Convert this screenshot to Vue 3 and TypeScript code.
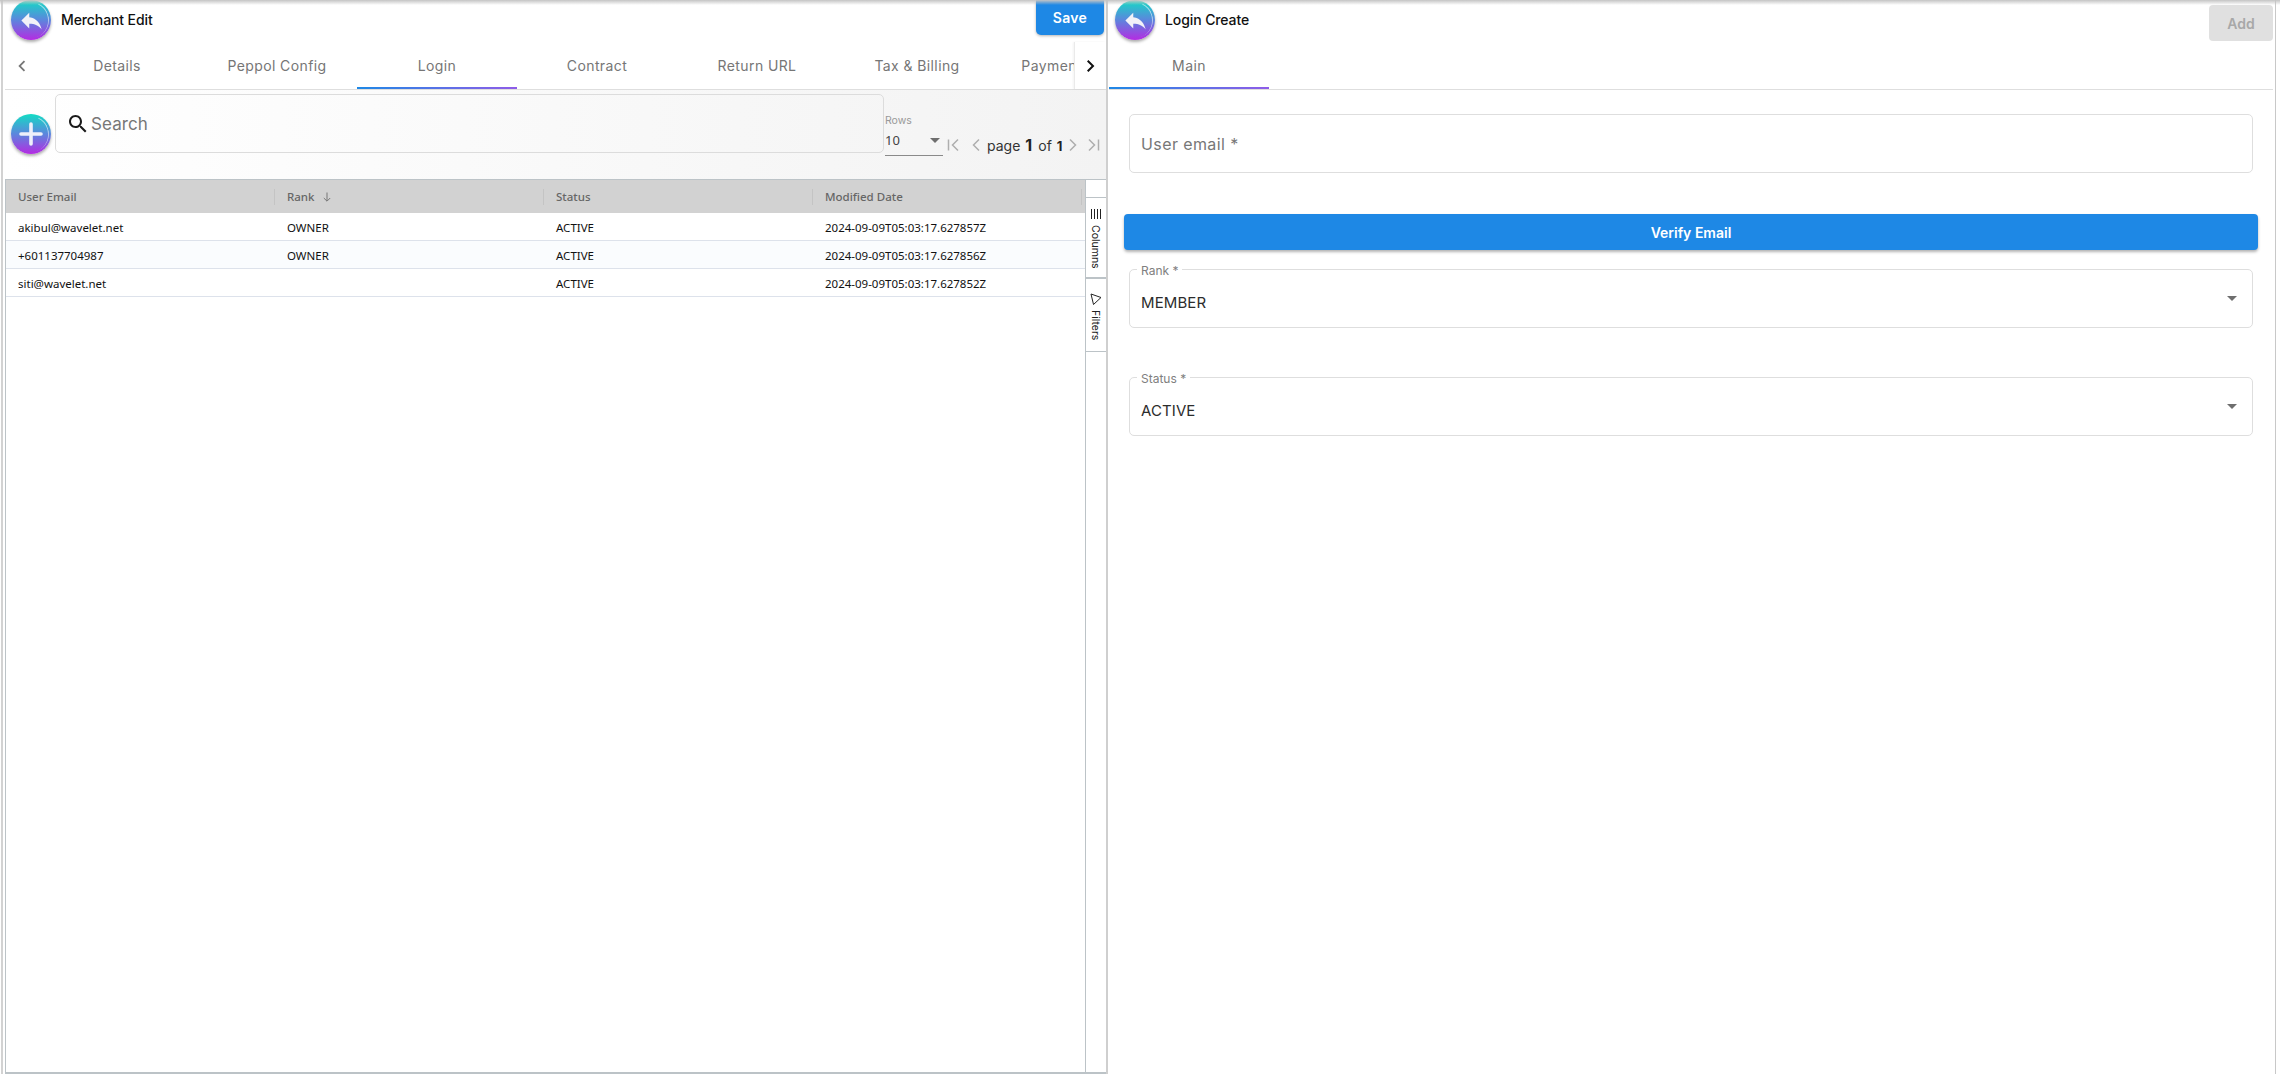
<script setup lang="ts">
const tabs: string[] = ['Details', 'Peppol Config', 'Login', 'Contract', 'Return URL', 'Tax & Billing', 'Payment Config']
const columns: string[] = ['User Email', 'Rank', 'Status', 'Modified Date']
interface Row { email: string; rank: string; status: string; modified: string }
const rows: Row[] = [
  { email: 'akibul@wavelet.net', rank: 'OWNER', status: 'ACTIVE', modified: '2024-09-09T05:03:17.627857Z' },
  { email: '+601137704987', rank: 'OWNER', status: 'ACTIVE', modified: '2024-09-09T05:03:17.627856Z' },
  { email: 'siti@wavelet.net', rank: '', status: 'ACTIVE', modified: '2024-09-09T05:03:17.627852Z' },
]
const selects = [
  { label: 'Rank *', value: 'MEMBER' },
  { label: 'Status *', value: 'ACTIVE' },
]
</script>

<template>
  <div class="page">
    <section class="panel left">
      <header class="head">
        <button class="round">
          <svg viewBox="0 0 24 24" width="27" height="27"><path d="M10 9V5l-7 7 7 7v-4.1c5 0 8.5 1.6 11 5.1-1-5-4-10-11-11z" fill="#f2f2f8" /></svg>
          <span class="gloss"></span>
        </button>
        <span class="title">Merchant Edit</span>
        <button class="save">Save</button>
      </header>

      <nav class="tabbar">
        <span class="scroll-l">
          <svg viewBox="0 0 24 24" width="22" height="22"><path d="M15.41 7.41L14 6l-6 6 6 6 1.41-1.41L10.83 12z" fill="#777" /></svg>
        </span>
        <div class="strip">
          <span v-for="t in tabs" :key="t" class="tab" :class="{ active: t === 'Login' }">{{ t }}</span>
        </div>
        <span class="scroll-r">
          <svg viewBox="0 0 24 24" width="24" height="24"><path d="M9.41 6L8 7.41 12.58 12 8 16.59 9.41 18l6-6z" fill="#111" /></svg>
        </span>
      </nav>

      <div class="toolbar">
        <button class="round add">
          <svg viewBox="0 0 40 40" width="40" height="40"><path d="M20 10v20M10 20h20" stroke="#eef0fa" stroke-width="3.6" stroke-linecap="round" fill="none" /></svg>
          <span class="gloss"></span>
        </button>
        <div class="search">
          <svg viewBox="0 0 24 24" width="24" height="24"><path d="M15.5 14h-.79l-.28-.27C15.41 12.59 16 11.11 16 9.5 16 5.91 13.09 3 9.5 3S3 5.91 3 9.5 5.91 16 9.5 16c1.61 0 3.09-.59 4.23-1.57l.27.28v.79l5 4.99L20.49 19l-4.99-5zm-6 0C7.01 14 5 11.99 5 9.5S7.01 5 9.5 5 14 7.01 14 9.5 11.99 14 9.5 14z" fill="#1a1a1a" /></svg>
          <span>Search</span>
        </div>
        <div class="rows">
          <span class="rows-label">Rows</span>
          <div class="rows-value"><span>10</span><i class="caret"></i></div>
        </div>
        <div class="pager">
          <svg viewBox="0 0 18 18" width="18" height="18"><path d="M3.5 3.5v11M13 3.5L7.5 9l5.5 5.500" class="pg" /></svg>
          <svg class="pg-prev" viewBox="0 0 18 18" width="18" height="18"><path d="M12 3.500L6.500 9l5.500 5.500" class="pg" /></svg>
          <span class="pg-text">page<b class="big">1</b>of<b class="small">1</b></span>
          <svg viewBox="0 0 18 18" width="18" height="18"><path d="M6 3.500L11.500 9 6 14.500" class="pg" /></svg>
          <svg class="pg-last" viewBox="0 0 18 18" width="18" height="18"><path d="M14.500 3.500v11M5 3.500L10.500 9 5 14.500" class="pg" /></svg>
        </div>
      </div>

      <div class="grid">
        <div class="grid-main">
          <div class="grid-head">
            <div v-for="c in columns" :key="c" class="hcell">
              <span>{{ c }}</span>
              <svg v-if="c === 'Rank'" viewBox="0 0 12 12" width="12" height="12"><path d="M6 1.500v8.500M2.800 7L6 10.200 9.200 7" stroke="#777" stroke-width="1" fill="none" /></svg>
            </div>
          </div>
          <div v-for="(r, i) in rows" :key="r.email" class="grid-row" :class="{ odd: i === 1 }">
            <div class="cell">{{ r.email }}</div>
            <div class="cell">{{ r.rank }}</div>
            <div class="cell">{{ r.status }}</div>
            <div class="cell">{{ r.modified }}</div>
          </div>
        </div>
        <aside class="side">
          <div class="side-top"></div>
          <div class="side-btn cols">
            <svg viewBox="0 0 12 10" width="12" height="10"><path d="M1.500 0v10M4.500 0v10M7.500 0v10M10.500 0v10" stroke="#222" stroke-width="1" fill="none" /></svg>
            <span>Columns</span>
          </div>
          <div class="side-btn filters">
            <svg viewBox="0 0 12 12" width="12" height="12"><path d="M1 1l10 3.500-7.500 7z" stroke="#222" stroke-width="1" stroke-linejoin="round" fill="none" /></svg>
            <span>Filters</span>
          </div>
        </aside>
      </div>
    </section>

    <section class="panel right">
      <header class="head">
        <button class="round">
          <svg viewBox="0 0 24 24" width="27" height="27"><path d="M10 9V5l-7 7 7 7v-4.1c5 0 8.500 1.600 11 5.100-1-5-4-10-11-11z" fill="#f2f2f8" /></svg>
          <span class="gloss"></span>
        </button>
        <span class="title">Login Create</span>
        <button class="addbtn">Add</button>
      </header>
      <nav class="tabbar single">
        <span class="tab active">Main</span>
      </nav>
      <form class="form" @submit.prevent>
        <div class="field email"><span>User email *</span></div>
        <button class="verify">Verify Email</button>
        <div v-for="s in selects" :key="s.label" class="field select">
          <label>{{ s.label }}</label>
          <span class="val">{{ s.value }}</span>
          <i class="caret"></i>
        </div>
      </form>
    </section>
    <div class="top-shadow"></div>
  </div>
</template>

<style>
html, body { margin: 0; background: #fff; overflow: hidden; }
</style>

<style scoped>
.page {
  position: relative;
  display: flex;
  width: 2280px;
  height: 1082px;
  padding: 0 4px 8px 1px;
  box-sizing: border-box;
  font-family: Inter, "Noto Sans", sans-serif;
  color: #111;
  background: #fff;
}
.top-shadow {
  position: absolute;
  inset: 0 0 auto 0;
  height: 5px;
  background: linear-gradient(#c4c4c4, rgba(255, 255, 255, 0));
  pointer-events: none;
}
.panel {
  display: flex;
  flex-direction: column;
  box-sizing: border-box;
  height: 100%;
}
.left {
  width: 1107px;
  border-left: 2px solid #d2d2d2;
  border-right: 2px solid #cfcfcf;
}
.right {
  flex: 1;
  border-right: 1px solid #c8c8c8;
}
.head {
  display: flex;
  align-items: flex-start;
  height: 42px;
  flex: none;
}
.left .head { padding: 0 2px 0 8px; }
.right .head { padding: 0 2px 0 7px; }
.round {
  position: relative;
  width: 40px;
  height: 40px;
  padding: 0;
  border: 0;
  border-radius: 50%;
  display: flex;
  align-items: center;
  justify-content: center;
  flex: none;
  background: linear-gradient(#12dcc4 0%, #5c86dd 50%, #b42ce2 100%);
  box-shadow: 0 2px 3px rgba(0, 0, 0, 0.32);
}
.gloss {
  position: absolute;
  inset: 2px;
  border-radius: 50%;
  border-top: 1px solid transparent;
  border-right: 1px solid rgba(255, 255, 255, 0.55);
  transform: rotate(-20deg);
}
.title {
  margin: 11px 0 0 10px;
  font-size: 14px;
  line-height: 17px;
  font-weight: 500;
  color: #111;
  letter-spacing: -0.1px;
}
.save {
  margin-left: auto;
  width: 68px;
  height: 35px;
  border: 0;
  border-radius: 0 0 5px 5px;
  background: #1e88e5;
  color: #fff;
  font: 600 14px Inter, sans-serif;
  letter-spacing: 0.3px;
  box-shadow: 0 1px 3px rgba(0, 0, 0, 0.3);
}
.addbtn {
  margin: 5px 0 0 auto;
  width: 64px;
  height: 36px;
  border: 0;
  border-radius: 4px;
  background: #e0e0e0;
  color: #a8a8a8;
  font: 600 14px Inter, sans-serif;
}
.tabbar {
  display: flex;
  flex: none;
  margin-left: 2px;
  border-bottom: 1px solid #dedede;
  box-sizing: content-box;
  height: 47px;
}
.tabbar.single { margin-left: 1px; margin-right: 2px; }
.scroll-l {
  width: 32px;
  flex: none;
  display: flex;
  align-items: center;
  box-sizing: border-box;
  padding-left: 6px;
}
.scroll-r {
  width: 32px;
  flex: none;
  display: flex;
  align-items: center;
  justify-content: center;
  border-left: 1px solid #eaeaea;
  box-sizing: border-box;
  box-shadow: -1px 0 2px rgba(0, 0, 0, 0.05);
  background: #fff;
}
.strip {
  display: flex;
  flex: 1;
  overflow: hidden;
  min-width: 0;
}
.tab {
  position: relative;
  width: 160px;
  flex: none;
  display: flex;
  align-items: center;
  justify-content: center;
  font-size: 14px;
  font-weight: 400;
  color: #767676;
  letter-spacing: 0.4px;
  padding-bottom: 1px;
  box-sizing: border-box;
  white-space: nowrap;
}
.tab.active::after {
  content: "";
  position: absolute;
  left: 0;
  right: 0;
  bottom: 0;
  height: 2px;
  background: linear-gradient(90deg, #1e88e5, #8f5ce8);
}
.toolbar {
  display: flex;
  align-items: flex-start;
  height: 89px;
  flex: none;
  padding-left: 8px;
  background: linear-gradient(90deg, #fff, #f3f3f3);
}
.add { margin-top: 24px; }
.search {
  display: flex;
  align-items: center;
  width: 829px;
  height: 59px;
  margin: 4px 0 0 4px;
  padding: 1px 0 0 10px;
  border: 1px solid #dcdcdc;
  border-radius: 5px;
  box-sizing: border-box;
  font-size: 17px;
  color: #777;
  flex: none;
}
.search span { margin-left: 1px; letter-spacing: 0.1px; }
.rows {
  width: 58px;
  height: 66px;
  margin: 0 0 0 1px;
  padding-top: 24px;
  box-sizing: border-box;
  flex: none;
  display: flex;
  flex-direction: column;
}
.rows-label { font-size: 10.500px; line-height: 14px; color: #999; }
.rows-value {
  display: flex;
  align-items: center;
  justify-content: space-between;
  height: 28px;
  padding-right: 3px;
  font: 400 13px "Noto Sans", sans-serif;
  color: #444;
  border-bottom: 1px solid #8a8a8a;
  box-sizing: border-box;
  padding-bottom: 3px;
}
.caret {
  display: block;
  width: 0;
  height: 0;
  border-left: 5px solid transparent;
  border-right: 5px solid transparent;
  border-top: 5px solid #6e6e6e;
}
.pager {
  display: flex;
  align-items: center;
  margin: 46px 0 0 2px;
  height: 18px;
}
.pg { stroke: #aeaeae; stroke-width: 1.500; fill: none; }
.pg-prev { margin-left: 4px; }
.pg-last { margin-left: 2px; }
.pg-text {
  display: flex;
  align-items: baseline;
  margin-left: 2px;
  font-size: 14px;
  color: #333;
  width: 77px;
  flex: none;
}
.big { font-size: 16px; font-weight: 700; margin: 0 6px 0 5px; color: #222; }
.small { font-size: 13px; font-weight: 700; margin-left: 5px; color: #222; }
.grid {
  display: flex;
  flex: 1;
  min-height: 0;
  margin-left: 2px;
  border: 1px solid #bcc3c7;
  border-right: 0;
  border-bottom: 2px solid #bcc3c7;
  box-sizing: border-box;
  font-family: "Noto Sans", sans-serif;
}
.grid-main { flex: 1; min-width: 0; }
.grid-head {
  display: grid;
  grid-template-columns: repeat(4, 269px);
  height: 33px;
  background: #d2d2d2;
  align-items: center;
}
.hcell {
  display: flex;
  align-items: center;
  height: 16px;
  padding-left: 12px;
  gap: 6px;
  border-right: 1px solid #c4c4c4;
  box-sizing: border-box;
  font-size: 11.500px;
  font-weight: 500;
  color: #666;
}
.grid-row {
  display: grid;
  grid-template-columns: repeat(4, 269px);
  height: 28px;
  border-bottom: 1px solid #dde2eb;
  box-sizing: border-box;
  align-items: center;
  font-size: 11.500px;
  color: #111;
}
.grid-row.odd { background: #fafcfe; }
.cell { padding: 2px 0 0 12px; }
.side {
  width: 21px;
  flex: none;
  border-left: 1px solid #bcc3c7;
  box-sizing: border-box;
  font-family: Inter, sans-serif;
  font-size: 10.500px;
  color: #222;
}
.side-top { height: 17px; border-bottom: 1px solid #bcc3c7; box-sizing: content-box; }
.side-btn {
  display: flex;
  flex-direction: column;
  align-items: center;
  box-sizing: border-box;
  background: #fff;
}
.side-btn span { writing-mode: vertical-rl; line-height: 15px; margin-right: 1px; }
.cols {
  height: 81px;
  padding-top: 11px;
  gap: 6px;
  border-bottom: 2px solid #bcc3c7;
}
.filters {
  height: 73px;
  padding-top: 14px;
  gap: 5px;
  border-bottom: 1px solid #bcc3c7;
}
.form {
  display: flex;
  flex-direction: column;
  padding: 24px 22px 0 21px;
}
.field {
  position: relative;
  display: flex;
  align-items: center;
  height: 59px;
  padding: 0 11px;
  border: 1px solid #dedede;
  border-radius: 5px;
  box-sizing: border-box;
  font-size: 16px;
}
.email { color: #777; letter-spacing: 0.4px; }
.verify {
  height: 36px;
  margin: 41px -5px 19px -5px;
  border: 0;
  border-radius: 4px;
  background: #1e88e5;
  color: #fff;
  font: 600 14px Inter, sans-serif;
  box-shadow: 0 2px 3px rgba(0, 0, 0, 0.3);
}
.select { margin-bottom: 49px; padding-top: 7px; }
.select label {
  position: absolute;
  left: 7px;
  top: -6px;
  padding: 0 4px;
  background: #fff;
  font-size: 12px;
  line-height: 14px;
  color: #808080;
}
.val { font-size: 15px; color: #2c2c2c; letter-spacing: 0.1px; }
.select .caret {
  position: absolute;
  right: 15px;
  top: 26px;
}
</style>
